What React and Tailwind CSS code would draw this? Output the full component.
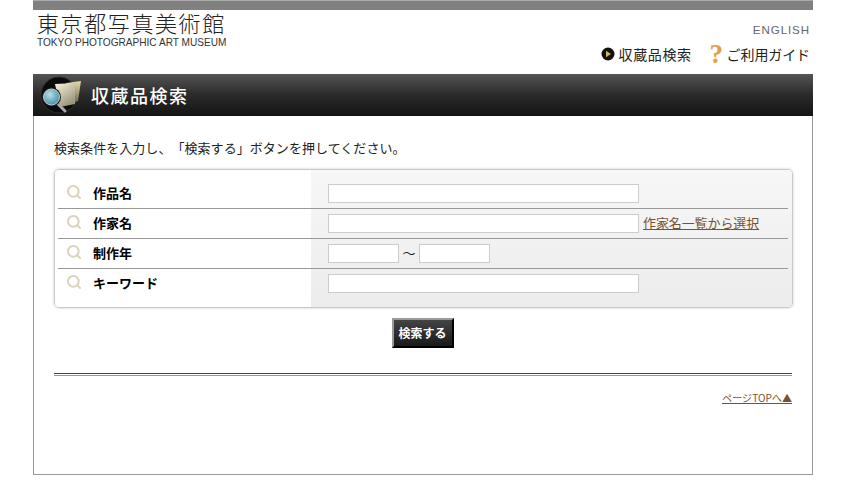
import React from "react";
import { Search } from "lucide-react";

const jp = "font-['Noto_Sans_CJK_JP','Noto_Sans',sans-serif] [text-spacing-trim:space-all]";

function TitleIcon() {
  return (
    <svg width="42" height="38" viewBox="0 0 42 38" className="shrink-0">
      <defs>
        <linearGradient id="p1" x1="0" y1="0" x2="0.6" y2="1">
          <stop offset="0" stopColor="#f8f3de" />
          <stop offset="1" stopColor="#9a9478" />
        </linearGradient>
        <linearGradient id="p2" x1="0" y1="0" x2="0" y2="1">
          <stop offset="0" stopColor="#e2d9a8" />
          <stop offset="1" stopColor="#6d6850" />
        </linearGradient>
        <radialGradient id="l1" cx="0.4" cy="0.35" r="0.7">
          <stop offset="0" stopColor="#b8e0ea" />
          <stop offset="1" stopColor="#3f8ba5" />
        </radialGradient>
      </defs>
      <circle cx="19" cy="19" r="18" fill="#0b0b0b" stroke="#2e2e2e" strokeWidth="1" />
      <path d="M26 7 L41 5 L38 25 L33 27 Z" fill="url(#p2)" />
      <path d="M15 8 L35 7 L35 28 L20 31 Z" fill="url(#p1)" />
      <path d="M17 27 L25 35" stroke="#a8a8a8" strokeWidth="3" strokeLinecap="round" />
      <circle cx="11.5" cy="21" r="9.5" fill="#1c1c1c" />
      <circle cx="11.5" cy="21" r="8" fill="url(#l1)" stroke="#c4cccf" strokeWidth="1" />
    </svg>
  );
}

function PlayIcon() {
  return (
    <svg width="14" height="14" viewBox="0 0 14 14" className="shrink-0">
      <circle cx="7" cy="7" r="6.5" fill="#111" />
      <path d="M5 3.8 L10 7 L5 10.2 Z" fill="#d9b25c" />
    </svg>
  );
}

const rowCls = (first, last) =>
  `flex items-start ${first ? "h-[39px]" : last ? "h-[38px]" : "h-[30px]"} ${last ? "" : "border-b border-[#999999]"}`;

function Label({ text, first, last }) {
  return (
    <div className={`${rowCls(first, last)} ${first ? "pt-[13px]" : "pt-[4px]"}`}>
      <Search size={16} strokeWidth={3} className="mt-px mr-[11px] ml-[8px] text-[#dad4bd]" />
      <span className="text-[13px] leading-[20px] font-bold text-black">{text}</span>
    </div>
  );
}

const inputCls = "h-[19px] border border-[#cccccc] bg-white";

function Cell({ first, last, children }) {
  return (
    <div className={`${rowCls(first, last)} pl-[17px] ${first ? "pt-[14px]" : "pt-[5px]"}`}>
      {children}
    </div>
  );
}

export default function App() {
  return (
    <div className={`h-[482px] w-[849px] overflow-hidden bg-white ${jp}`}>
      <div className="ml-[33px] w-[780px]">
        <div className="h-[10px] border-t border-[#aaaaaa] bg-[#808080]" />
        <div className="flex h-[64px] justify-between">
          <div className="pl-[4px]">
            <div className="text-[22px] leading-[24px] font-light tracking-[1.6px] whitespace-nowrap text-[#222222]">
              東京都写真美術館
            </div>
            <div className="mt-[2px] font-['Liberation_Sans',sans-serif] text-[10.1px] leading-[13px] whitespace-nowrap text-[#333333]">
              TOKYO PHOTOGRAPHIC ART MUSEUM
            </div>
          </div>
          <div className="flex flex-col items-end pr-[3px]">
            <div className="mt-[14px] font-['Liberation_Sans',sans-serif] text-[11.5px] leading-[13px] tracking-[0.95px] text-[#666666]">
              ENGLISH
            </div>
            <div className="mt-[7px] flex items-center text-[14px] leading-[20px] text-[#222222]">
              <PlayIcon />
              <span className="ml-[4px] tracking-[0.6px]">収蔵品検索</span>
              <span className="ml-[18px] w-[17px] font-['Liberation_Serif',serif] text-[27px] leading-[20px] font-bold text-[#e0a044]">?</span>
              <span className="tracking-[-0.1px]">ご利用ガイド</span>
            </div>
          </div>
        </div>

        <div className="h-[401px] border-x border-b border-[#999999]">
          <div className="-mx-px flex h-[42px] items-center bg-linear-to-b from-[#555555] via-[#2a2a2a] to-[#141414] pl-[7px]">
            <TitleIcon />
            <span className="ml-[9px] text-[18px] leading-[24px] font-medium tracking-[1.5px] text-white">収蔵品検索</span>
          </div>

          <div className="px-[20px] pt-[23px]">
            <p className="text-[13px] leading-[18px] tracking-[0.05px] whitespace-nowrap text-[#222222]">検索条件を入力し、「検索する」ボタンを押してください。</p>

            <div className="mt-[12px] flex h-[139px] w-[739px] overflow-hidden rounded-[5px] border border-[#c8c8c8] shadow-[0_0_3px_rgba(0,0,0,0.2)]">
              <div className="w-[256px] bg-white pl-[3px]">
                <Label text="作品名" first />
                <Label text="作家名" />
                <Label text="制作年" />
                <Label text="キーワード" last />
              </div>
              <div className="w-[481px] bg-linear-to-b from-[#f7f7f7] to-[#ececec] pr-[4px]">
                <Cell first><div className={`${inputCls} w-[311px]`} /></Cell>
                <Cell>
                  <div className={`${inputCls} w-[311px]`} />
                  <a className="-mt-px ml-[4px] text-[13px] leading-[20px] tracking-[-0.1px] whitespace-nowrap text-[#7a5230] underline">作家名一覧から選択</a>
                </Cell>
                <Cell>
                  <div className={`${inputCls} w-[71px]`} />
                  <span className="-mt-px w-[20px] text-center text-[13px] leading-[20px] text-[#222222]">〜</span>
                  <div className={`${inputCls} w-[71px]`} />
                </Cell>
                <Cell last><div className={`${inputCls} w-[311px]`} /></Cell>
              </div>
            </div>

            <div className="mt-[10px] flex justify-center pr-[1px]">
              <button className="h-[30px] w-[62px] border-t-2 border-r-2 border-b-2 border-l-2 border-t-[#9a9a9a] border-r-black border-b-black border-l-[#9a9a9a] bg-linear-to-b from-[#444444] to-[#1a1a1a] text-[12px] leading-[24px] font-bold text-white">
                検索する
              </button>
            </div>

            <div className="mt-[25px] h-[3px] w-[738px] border-t border-b border-t-[#444444] border-b-[#999999]" />

            <div className="mt-[15px] flex w-[738px] justify-end">
              <a className="text-[10.1px] leading-[14px] whitespace-nowrap text-[#7a5230] underline">
                ページTOPへ▲
              </a>
            </div>
          </div>
        </div>
      </div>
    </div>
  );
}
